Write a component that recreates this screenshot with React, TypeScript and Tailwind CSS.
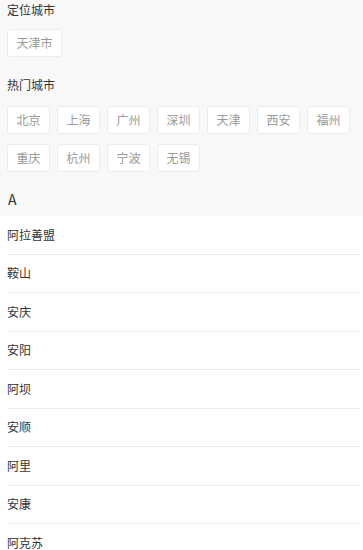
const located = ["天津市"];
const hotCities = ["北京", "上海", "广州", "深圳", "天津", "西安", "福州", "重庆", "杭州", "宁波", "无锡"];
const aCities = ["阿拉善盟", "鞍山", "安庆", "安阳", "阿坝", "安顺", "阿里", "安康", "阿克苏", "阿勒泰"];

function CityButton({ name }: { name: string }) {
  return (
    <div className="h-[28px] px-[8.5px] flex items-center bg-white border border-[#ececec] rounded-[3px] text-[12px] text-[#999]">
      {name}
    </div>
  );
}

export default function App() {
  return (
    <div
      className="w-[363px] h-[550px] overflow-hidden bg-white"
      style={{ fontFamily: '"Noto Sans CJK SC", "Noto Sans", sans-serif' }}
    >
      <div className="bg-[#f8f8f8] pl-[7px]">
        <div className="h-[20px] leading-[20px] text-[12px] text-[#333]">定位城市</div>
        <div className="flex gap-[7px] mt-[9px]">
          {located.map((c) => (
            <CityButton key={c} name={c} />
          ))}
        </div>
        <div className="h-[20px] leading-[20px] text-[12px] text-[#333] mt-[18px]">热门城市</div>
        <div className="flex flex-wrap gap-x-[7px] gap-y-[10px] mt-[11px] w-[352px]">
          {hotCities.map((c) => (
            <CityButton key={c} name={c} />
          ))}
        </div>
        <div className="h-[34px] mt-[10px] flex items-center text-[14px] text-[#333] pl-px">A</div>
      </div>
      <div className="pl-[7px] pr-[3px]">
        {aCities.map((c) => (
          <div
            key={c}
            className="h-[38.5px] flex items-center border-b border-[#ececec] text-[12px] text-[#333]"
          >
            {c}
          </div>
        ))}
      </div>
    </div>
  );
}
